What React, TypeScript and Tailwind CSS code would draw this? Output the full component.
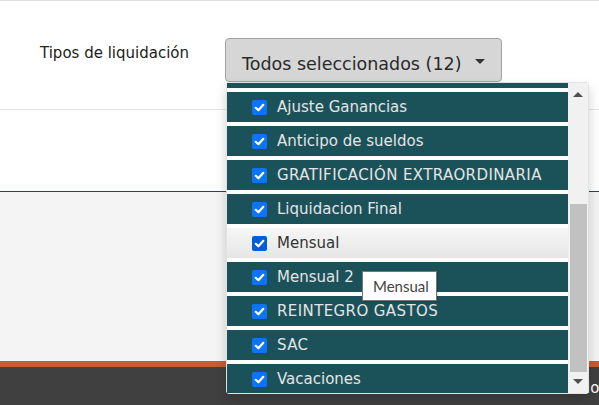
import React from 'react'

const items = [
  'Ajuste Ganancias',
  'Anticipo de sueldos',
  'GRATIFICACIÓN EXTRAORDINARIA',
  'Liquidacion Final',
  'Mensual',
  'Mensual 2',
  'REINTEGRO GASTOS',
  'SAC',
  'Vacaciones',
]

function Check({ hover }: { hover?: boolean }) {
  return (
    <span className={`flex h-[15px] w-[15px] shrink-0 items-center justify-center rounded-[2px] ${hover ? 'bg-[#005fd6]' : 'bg-[#0b74fb]'}`}>
      <svg width="11" height="11" viewBox="0 0 11 11" fill="none">
        <path d="M1.8 5.8 L4.4 8.3 L9.3 2.8" stroke="white" strokeWidth="2.2" strokeLinecap="round" strokeLinejoin="round" />
      </svg>
    </span>
  )
}

export default function App() {
  return (
    <div className="relative h-[405px] w-full overflow-hidden bg-white font-['DejaVu_Sans',sans-serif]">
      {/* header with filter */}
      <div className="flex h-[110px] border-t border-b border-t-[#e0e0e0] border-b-[#e6e6e6] pt-[37px]">
        <div className="w-[225px] shrink-0 pl-[40px] pt-[6px] text-[15px] leading-[18px] text-[#222]">
          Tipos de liquidación
        </div>
        <div className="relative">
          <button className="flex h-[44px] w-[277px] items-start rounded-[4px] border border-[#a3a3a3] bg-[#d6d6d6] pl-[16px] pt-[15px] pr-[16px]">
            <span className="text-[17.5px] leading-[20px] whitespace-nowrap text-[#2a2a2a]">Todos seleccionados (12)</span>
            <span className="ml-auto mt-[5px] h-0 w-0 border-l-[5px] border-r-[5px] border-t-[5px] border-l-transparent border-r-transparent border-t-[#333]" />
          </button>

          {/* dropdown menu */}
          <div className="absolute left-[1px] top-[44px] z-10 flex h-[312px] w-[363px] rounded-[3px] border border-[#e2e2e2] bg-white shadow-[0_6px_12px_rgba(0,0,0,0.18)]">
            <div className="flex flex-1 flex-col gap-[4px] overflow-hidden pb-[1px]">
              <div className="h-[5px] shrink-0 bg-[#1b525a]" />
              {items.map(label => {
                const hover = label === 'Mensual'
                const upper = label === label.toUpperCase()
                return (
                  <div
                    key={label}
                    className={`flex h-[30px] shrink-0 items-center pl-[25px] text-[15px] whitespace-nowrap ${hover ? 'bg-gradient-to-b from-[#f6f6f6] to-[#e6e6e6] text-[#333]' : 'bg-[#1b525a] text-[#e4e4e4]'}`}
                  >
                    <Check hover={hover} />
                    <span className={`ml-[10px] ${upper ? 'tracking-[0.4px]' : ''}`}>{label}</span>
                  </div>
                )
              })}
            </div>
            {/* scrollbar */}
            <div className="flex w-[20px] flex-col bg-[#f1f1f1]">
              <div className="flex h-[17px] justify-center pt-[9px]">
                <span className="h-0 w-0 border-b-[5px] border-l-[5px] border-r-[5px] border-b-[#505050] border-l-transparent border-r-transparent" />
              </div>
              <div className="flex-1">
                <div className="ml-[2px] mt-[104px] h-[168px] w-[17px] bg-[#c1c1c1]" />
              </div>
              <div className="flex h-[17px] items-end justify-center pb-[9px]">
                <span className="h-0 w-0 border-l-[5px] border-r-[5px] border-t-[5px] border-l-transparent border-r-transparent border-t-[#505050]" />
              </div>
            </div>
          </div>

          {/* native tooltip */}
          <div className="absolute left-[137px] top-[233px] z-20 flex h-[30px] w-[75px] items-center border border-[#767676] bg-white pl-[10px] font-['Lato',sans-serif] text-[15px] text-[#444] shadow-[1px_1px_2px_rgba(0,0,0,0.2)]">
            Mensual
          </div>
        </div>
      </div>

      <div className="h-[82px] border-b border-[#1d4a55]" />
      <div className="h-[169px] bg-[#f4f4f4]" />
      <div className="h-[6px] bg-[#c65d34]" />
      <div className="h-[40px] bg-[#404040] pl-[586px] pt-[10px] text-[15px] whitespace-nowrap text-white">
        lo
      </div>
    </div>
  )
}
